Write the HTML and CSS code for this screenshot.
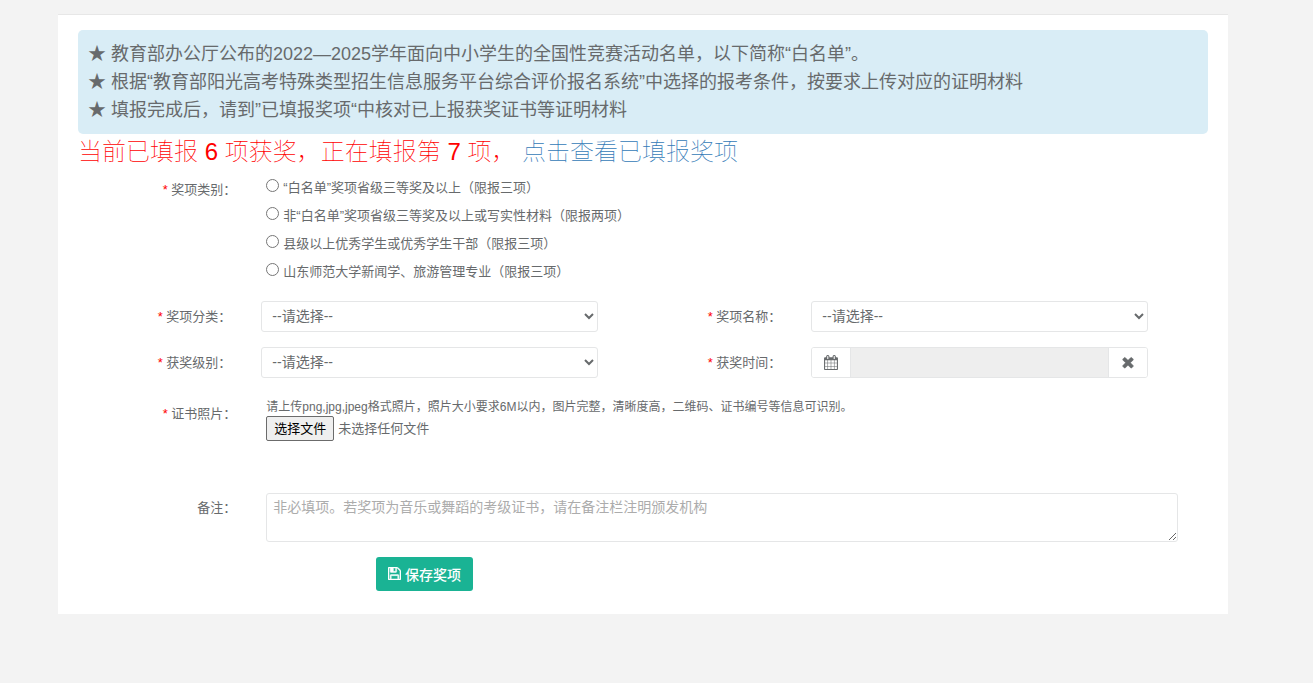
FILE: index.html
```html
<!DOCTYPE html>
<html lang="zh-CN">
<head>
<meta charset="utf-8">
<meta name="viewport" content="width=device-width, initial-scale=1">
<title>奖项填报</title>
<link rel="stylesheet" href="styles.css">
</head>
<body>
<main class="card">
  <div class="notice">
    <p>★ 教育部办公厅公布的2022—2025学年面向中小学生的全国性竞赛活动名单，以下简称“白名单”。</p>
    <p>★ 根据“教育部阳光高考特殊类型招生信息服务平台综合评价报名系统”中选择的报考条件，按要求上传对应的证明材料</p>
    <p>★ 填报完成后，请到”已填报奖项“中核对已上报获奖证书等证明材料</p>
  </div>
  <h2 class="progress">当前已填报 <span class="count">6</span> 项获奖，正在填报第 <span class="count">7</span> 项， <a href="#list">点击查看已填报奖项</a></h2>

  <form class="form">
    <div class="row category" role="radiogroup" aria-labelledby="category-label">
      <span class="label" id="category-label"><span class="required">*</span> 奖项类别：</span>
      <div class="options">
        <label class="option"><input type="radio" name="category">“白名单”奖项省级三等奖及以上（限报三项）</label>
        <label class="option"><input type="radio" name="category">非“白名单”奖项省级三等奖及以上或写实性材料（限报两项）</label>
        <label class="option"><input type="radio" name="category">县级以上优秀学生或优秀学生干部（限报三项）</label>
        <label class="option"><input type="radio" name="category">山东师范大学新闻学、旅游管理专业（限报三项）</label>
      </div>
    </div>

    <div class="pairs">
      <div class="field">
        <label class="label" for="type"><span class="required">*</span> 奖项分类：</label>
        <select class="control" id="type"><option>--请选择--</option></select>
      </div>
      <div class="field">
        <label class="label" for="name"><span class="required">*</span> 奖项名称：</label>
        <select class="control" id="name"><option>--请选择--</option></select>
      </div>
      <div class="field">
        <label class="label" for="level"><span class="required">*</span> 获奖级别：</label>
        <select class="control" id="level"><option>--请选择--</option></select>
      </div>
      <div class="field">
        <label class="label" for="date"><span class="required">*</span> 获奖时间：</label>
        <div class="date-group">
          <button class="addon" type="button" aria-label="选择日期">
            <svg width="14" height="15" viewBox="0 0 1664 1792" fill="currentColor" aria-hidden="true"><path d="M128 1664h288v-288h-288v288zm352 0h320v-288h-320v288zm-352-352h288v-320h-288v320zm352 0h320v-320h-320v320zm-352-384h288v-288h-288v288zm736 736h320v-288h-320v288zm-384-736h320v-288h-320v288zm768 736h288v-288h-288v288zm-384-352h320v-320h-320v320zm-352-864v-288q0-13-9.500-22.500t-22.500-9.500h-64q-13 0-22.500 9.500t-9.500 22.500v288q0 13 9.500 22.500t22.500 9.500h64q13 0 22.500-9.500t9.500-22.500zm736 864h288v-320h-288v320zm-384-384h320v-288h-320v288zm384 0h288v-288h-288v288zm32-480v-288q0-13-9.500-22.500t-22.500-9.500h-64q-13 0-22.500 9.500t-9.500 22.500v288q0 13 9.500 22.500t22.500 9.500h64q13 0 22.500-9.500t9.500-22.500zm384-64v1280q0 52-38 90t-90 38h-1408q-52 0-90-38t-38-90v-1280q0-52 38-90t90-38h128v-96q0-66 47-113t113-47h64q66 0 113 47t47 113v96h384v-96q0-66 47-113t113-47h64q66 0 113 47t47 113v96h128q52 0 90 38t38 90z"/></svg>
          </button>
          <input class="date-input" id="date" type="text" readonly>
          <button class="addon" type="button" aria-label="清除日期">
            <svg width="16" height="16" viewBox="0 90 1792 1792" fill="currentColor" aria-hidden="true"><path d="M1490 1322q0 40-28 68l-136 136q-28 28-68 28t-68-28l-294-294-294 294q-28 28-68 28t-68-28l-136-136q-28-28-28-68t28-68l294-294-294-294q-28-28-28-68t28-68l136-136q28-28 68-28t68 28l294 294 294-294q28-28 68-28t68 28l136 136q28 28 28 68t-28 68l-294 294 294 294q28 28 28 68z" stroke="currentColor" stroke-width="60"/></svg>
          </button>
        </div>
      </div>
    </div>

    <div class="row photo">
      <span class="label"><span class="required">*</span> 证书照片：</span>
      <div>
        <p class="hint">请上传png,jpg,jpeg格式照片，照片大小要求6M以内，图片完整，清晰度高，二维码、证书编号等信息可识别。</p>
        <div class="file">
          <input class="file-input" type="file" id="photo" accept="image/png,image/jpeg">
          <label class="file-button" for="photo">选择文件</label>
          <span>未选择任何文件</span>
        </div>
      </div>
    </div>

    <div class="row remark">
      <label class="label" for="remark">备注：</label>
      <textarea class="textarea" id="remark" placeholder="非必填项。若奖项为音乐或舞蹈的考级证书，请在备注栏注明颁发机构"></textarea>
    </div>

    <button class="save" type="submit">
      <svg width="13" height="13" viewBox="128 128 1536 1536" fill="currentColor" stroke="currentColor" stroke-width="50" aria-hidden="true"><path d="M512 1536h768v-384h-768v384zm896 0h128v-896q0-14-10-38.500t-20-34.500l-281-281q-10-10-34-20t-39-10v416q0 40-28 68t-68 28h-576q-40 0-68-28t-28-68v-416h-128v1280h128v-416q0-40 28-68t68-28h832q40 0 68 28t28 68v416zm-384-928v-320q0-13-9.500-22.500t-22.500-9.500h-192q-13 0-22.500 9.500t-9.500 22.500v320q0 13 9.500 22.500t22.500 9.500h192q13 0 22.500-9.500t9.500-22.500zm640 32v928q0 40-28 68t-68 28h-1344q-40 0-68-28t-28-68v-1344q0-40 28-68t68-28h928q40 0 88 20t76 48l280 280q28 28 48 76t20 88z"/></svg>
      保存奖项
    </button>
  </form>
</main>
</body>
</html>
```

FILE: styles.css
```css
* {
  box-sizing: border-box;
}

body {
  margin: 0;
  padding: 14px 85px 0 58px;
  background: #f3f3f3;
  color: #676a6c;
  font: 13px/20px "Liberation Sans", "Noto Sans CJK SC", sans-serif;
}

button,
input,
select,
textarea {
  font-family: inherit;
  color: inherit;
}

p {
  margin: 0;
}

.card {
  padding: 15px 20px 23px;
  background: #fff;
  border-top: 1px solid #e7e7e7;
}

.notice {
  padding: 10px;
  border-radius: 5px;
  background: #d9edf6;
  font-size: 18px;
  line-height: 28px;
}

.progress {
  margin: 0;
  color: #f00;
  font-size: 24px;
  font-weight: 100;
  line-height: 36px;
}

.count {
  font-weight: 500;
}

.progress a {
  color: #337ab7;
  text-decoration: none;
}

.form {
  margin: 0 15px 0 -15px;
}

.row {
  display: grid;
  grid-template-columns: 1fr 5fr;
}

.row > * {
  margin: 0 15px;
}

.label {
  text-align: right;
}

.required {
  color: #f00;
}

.category {
  padding-top: 4px;
}

.category .label {
  padding-top: 6px;
}

.option {
  display: flex;
  align-items: center;
  gap: 4px;
  height: 28px;
}

.option input {
  width: 13px;
  height: 13px;
  margin: 0 0 6px;
}

.pairs {
  display: grid;
  grid-template-columns: 1fr 1fr;
  row-gap: 15px;
  margin: 15px 30px 0 0;
}

.field {
  display: grid;
  grid-template-columns: 1fr 2fr;
  align-items: center;
}

.field > * {
  margin: 0 15px;
}

.control {
  height: 31px;
  padding: 0 6px 1px;
  border: 1px solid #e5e6e7;
  border-radius: 3px;
  background: #fff;
  font-size: 14px;
}

.date-group {
  display: flex;
  height: 31px;
  border: 1px solid #e5e6e7;
  border-radius: 3px;
  overflow: hidden;
}

.addon {
  display: flex;
  flex: 0 0 38px;
  align-items: center;
  justify-content: center;
  padding: 0;
  border: 0;
  background: #fff;
}

.date-input {
  flex: 1;
  min-width: 0;
  border: solid #e5e6e7;
  border-width: 0 1px;
  background: #eee;
}

.photo {
  margin-top: 20px;
}

.photo .label {
  padding-top: 6px;
}

.hint {
  font-size: 12px;
  line-height: 18px;
}

.file {
  display: flex;
  align-items: center;
  gap: 4px;
  position: relative;
}

.file-input {
  position: absolute;
  width: 1px;
  height: 1px;
  opacity: 0;
}

.file-button {
  padding: 2px 7px;
  border: 1px solid #6b6b6b;
  border-radius: 2px;
  background: #efefef;
  color: #000;
  line-height: 19px;
}

.remark {
  margin-top: 52px;
}

.remark .label {
  padding-top: 5px;
}

.textarea {
  height: 49px;
  padding: 3px 6px;
  border: 1px solid #e5e6e7;
  border-radius: 3px;
  font-size: 14px;
  line-height: 20px;
  resize: both;
}

.textarea::placeholder {
  color: #acacac;
}

.save {
  display: flex;
  align-items: center;
  gap: 4px;
  height: 34px;
  margin: 15px 0 0 313px;
  padding: 0 12px 1px;
  border: 0;
  border-radius: 3px;
  background: #1ab394;
  color: #fff;
  font-size: 14px;
  font-weight: 500;
}
```
